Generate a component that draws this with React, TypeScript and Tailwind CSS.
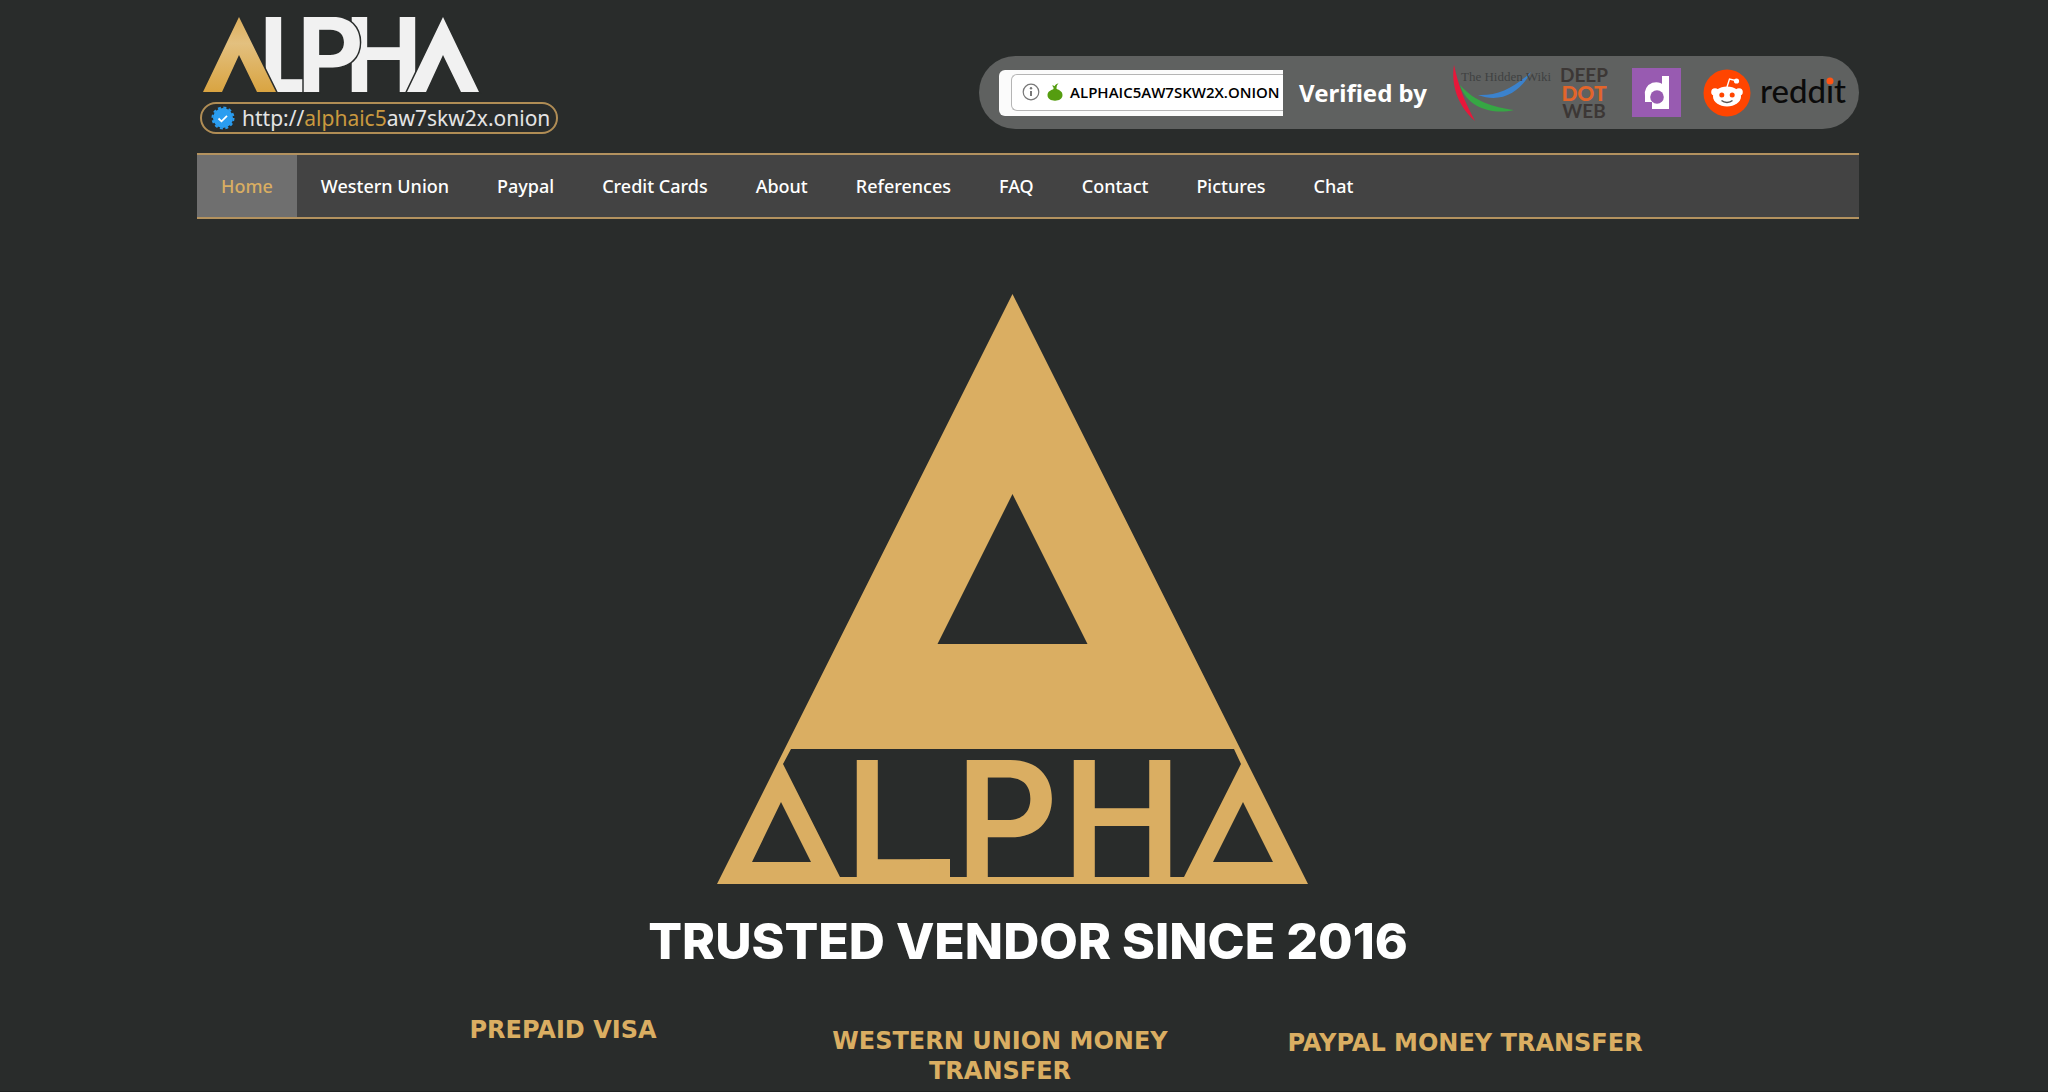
import React from 'react';

interface NavItem {
  label: string;
  active?: boolean;
}

const navItems: NavItem[] = [
  { label: 'Home', active: true },
  { label: 'Western Union' },
  { label: 'Paypal' },
  { label: 'Credit Cards' },
  { label: 'About' },
  { label: 'References' },
  { label: 'FAQ' },
  { label: 'Contact' },
  { label: 'Pictures' },
  { label: 'Chat' },
];

const BrandLogo: React.FC = () => (
  <svg viewBox="200 14 284 82" className="block h-[82px] w-[284px]" role="img" aria-label="Alpha">
    <defs>
      <linearGradient id="gold" x1="0" y1="0" x2="0" y2="1">
        <stop offset="0" stopColor="#dcae5c" />
        <stop offset="0.35" stopColor="#e3c07f" />
        <stop offset="1" stopColor="#d9a441" />
      </linearGradient>
    </defs>
    <g
      className="font-['Inter',sans-serif] text-[103px] font-bold"
      fill="#f1f1f1"
      stroke="#292c2b"
      strokeWidth="3"
      paintOrder="stroke"
    >
      <text x="259" y="92">L</text>
      <text x="345" y="92">H</text>
      <text x="297" y="92">P</text>
      <polygon points="443,17 479,92 461,92 443,55 426,92 407,92" />
    </g>
    <polygon
      points="239,17 276,92 257,92 239,55 222,92 203,92"
      fill="url(#gold)"
      stroke="#292c2b"
      strokeWidth="3"
      paintOrder="stroke"
    />
  </svg>
);

const VerifiedBadge: React.FC = () => (
  <svg viewBox="0 0 24 24" className="size-6 shrink-0" aria-hidden="true">
    <circle cx="12" cy="12" r="10" fill="#2a9df0" />
    <circle cx="12" cy="12" r="10.5" fill="none" stroke="#2a9df0" strokeWidth="2" strokeDasharray="3 2.5" />
    <path d="M7.500 12.500l3 2.800 5.500-5.500" fill="none" stroke="#fff" strokeWidth="1.800" />
  </svg>
);

const AddressBar: React.FC = () => (
  <div className="h-[46px] w-[284px] rounded-l-md bg-[#fbfbfb] pt-1 pl-3">
    <div className="flex h-[37px] items-center rounded-l-md border border-r-0 border-[#b5b5b5] bg-white pl-[10px]">
      <svg viewBox="0 0 18 18" className="size-[18px] shrink-0" aria-hidden="true">
        <circle cx="9" cy="9" r="7.800" fill="none" stroke="#777" strokeWidth="1.200" />
        <path d="M9 8v5" stroke="#777" strokeWidth="2" />
        <circle cx="9" cy="5.300" r="1.200" fill="#777" />
      </svg>
      <svg viewBox="0 0 16 18" className="ml-[7px] h-[18px] w-4 shrink-0" aria-hidden="true">
        <path
          d="M6.500 6C6.800 4 5.800 3.500 5 2.500c1.500-.2 2 .2 2.600.8C8 2 9.500.8 11.500.6 10 1.800 9.600 3 9.500 5.800c1.500 1 6 2 6 6.200 0 4-3.500 5.700-7.500 5.700S.5 16 .5 12c0-4 4.500-5 6-6z"
          fill="#559d10"
        />
      </svg>
      <span className="ml-[7px] font-['Open_Sans',sans-serif] text-[15px] font-semibold whitespace-nowrap text-black">
        ALPHAIC5AW7SKW2X.ONION
      </span>
    </div>
  </div>
);

const HiddenWikiLogo: React.FC = () => (
  <svg viewBox="0 0 102 58" className="h-[58px] w-[102px]" role="img" aria-label="The Hidden Wiki">
    <path d="M3 1C0 20 6 41 24 57 14 38 8 24 3 1z" fill="#e8173a" />
    <path d="M9 21c15 17 33 22 54 25C42 51 16 44 9 21z" fill="#36a744" />
    <path d="M27 31c19 1 36-7 53-23C70 27 51 40 27 31z" fill="#3b82cc" />
    <text x="10" y="17" fill="#404242" className="font-['Liberation_Serif',serif] text-[13px]">
      The Hidden Wiki
    </text>
  </svg>
);

const DreadLogo: React.FC = () => (
  <svg viewBox="0 0 49 49" className="size-[49px]" role="img" aria-label="Dread">
    <rect width="49" height="49" fill="#985bb1" />
    <path d="M30 8h7v33H20v-7h10z" fill="#fff" />
    <path d="M13 34V28a11.500 11.500 0 1 1 18 7l-7 2z" fill="#fff" />
    <circle cx="25" cy="29" r="6.800" fill="#985bb1" />
    <path d="M12 34h8v7h-8z" fill="#985bb1" />
  </svg>
);

const RedditLogo: React.FC = () => (
  <svg viewBox="0 0 144 50" className="h-[50px] w-36" role="img" aria-label="reddit">
    <circle cx="24" cy="25" r="23.500" fill="#ff4500" />
    <g fill="#fff">
      <ellipse cx="24" cy="28.500" rx="14" ry="10" />
      <circle cx="12" cy="24" r="3.800" />
      <circle cx="36" cy="24" r="3.800" />
      <circle cx="33.500" cy="13" r="2.600" />
    </g>
    <path d="M24 19l2.500-8 6 1.500" fill="none" stroke="#fff" strokeWidth="1.400" />
    <circle cx="18.800" cy="27" r="2.500" fill="#ff4500" />
    <circle cx="29.200" cy="27" r="2.500" fill="#ff4500" />
    <path d="M18.500 32.500c3 2.600 8 2.600 11 0" fill="none" stroke="#555" strokeWidth="1.400" />
    <text x="57" y="35" fill="#0b0b0b" className="font-['Lato',sans-serif] text-[33px] font-medium">
      reddit
    </text>
    <circle cx="127" cy="13" r="3.500" fill="#ff5414" />
  </svg>
);

const VerifiedBy: React.FC = () => (
  <div className="flex h-[73px] items-center rounded-full bg-[#5f6160] pr-3 pl-5">
    <AddressBar />
    <span className="ml-4 font-['Noto_Sans',sans-serif] text-2xl font-bold text-white">Verified by</span>
    <div className="ml-6">
      <HiddenWikiLogo />
    </div>
    <div className="ml-[7px] flex w-12 flex-col items-center font-['Lato',sans-serif] text-[19px] leading-[18px] font-bold text-[#3c3735]">
      <span>DEEP</span>
      <span className="text-[21px] font-black text-[#e2652b]">DOT</span>
      <span>WEB</span>
    </div>
    <div className="ml-6">
      <DreadLogo />
    </div>
    <div className="ml-[22px]">
      <RedditLogo />
    </div>
  </div>
);

// Triangle emblem, the letters stand on its base bar
const Emblem: React.FC = () => (
  <svg viewBox="716 293 593 592" className="h-[592px] w-[593px]" role="img" aria-label="Alpha emblem">
    <path
      fillRule="evenodd"
      fill="#daae62"
      d="M1012.500 294L1308 884H717zM1012.500 494L937.500 644H1087.500zM791 749L783 764 840 877H1184L1241 764 1234 749zM781 802L752 862H811zM1243 802L1213 862H1273z"
    />
    <rect x="920" y="859" width="30" height="19" fill="#daae62" />
    <g fill="#daae62" className="font-['Inter',sans-serif] text-[161px] font-semibold">
      <text x="845" y="877">L</text>
      <text x="955" y="877">P</text>
      <text x="1062" y="877">H</text>
    </g>
  </svg>
);

const App: React.FC = () => {
  return (
    <div className="min-h-screen border-b border-[#1f2121] bg-[#292c2b] font-['DejaVu_Sans',Verdana,sans-serif]">
      <div className="mx-auto max-w-[1670px] pl-2">
        <header className="flex items-start justify-between">
          <div className="pt-[14px] pl-[3px]">
            <BrandLogo />
            <div className="mt-[6px] flex h-8 items-center rounded-full border-2 border-[#b08d55] pr-[6px] pl-[9px]">
              <VerifiedBadge />
              <span className="ml-[7px] font-['Noto_Sans',sans-serif] text-[21px] leading-7 text-[#e4e4e4]">
                http://<span className="text-[#c9993f]">alphaic5</span>aw7skw2x.onion
              </span>
            </div>
          </div>
          <div className="pt-14">
            <VerifiedBy />
          </div>
        </header>

        <nav className="mt-[19px] flex border-y-2 border-[#b3925f] bg-[#434343]">
          {navItems.map((item) => (
            <a
              key={item.label}
              href="#"
              className={`px-6 font-['Noto_Sans',sans-serif] text-lg leading-[62px] font-medium ${
                item.active ? 'bg-[#6f6f6f] text-[#d9ae62]' : 'text-white'
              }`}
            >
              {item.label}
            </a>
          ))}
        </nav>

        <main>
          <div className="flex justify-center pt-[74px] pr-8">
            <Emblem />
          </div>
          <h1 className="mt-[26px] text-center font-['Inter',sans-serif] text-[50px] leading-[60px] font-extrabold text-white">
            TRUSTED VENDOR SINCE 2016
          </h1>
          <div className="mt-11 grid grid-cols-[436fr_438fr_492fr] px-[148px] text-center text-2xl leading-[30px] font-bold text-[#daae62]">
            <h2>PREPAID VISA</h2>
            <h2 className="px-10 pt-[11px]">WESTERN UNION MONEY TRANSFER</h2>
            <h2 className="pt-[13px]">PAYPAL MONEY TRANSFER</h2>
          </div>
        </main>
      </div>
    </div>
  );
};

export default App;
